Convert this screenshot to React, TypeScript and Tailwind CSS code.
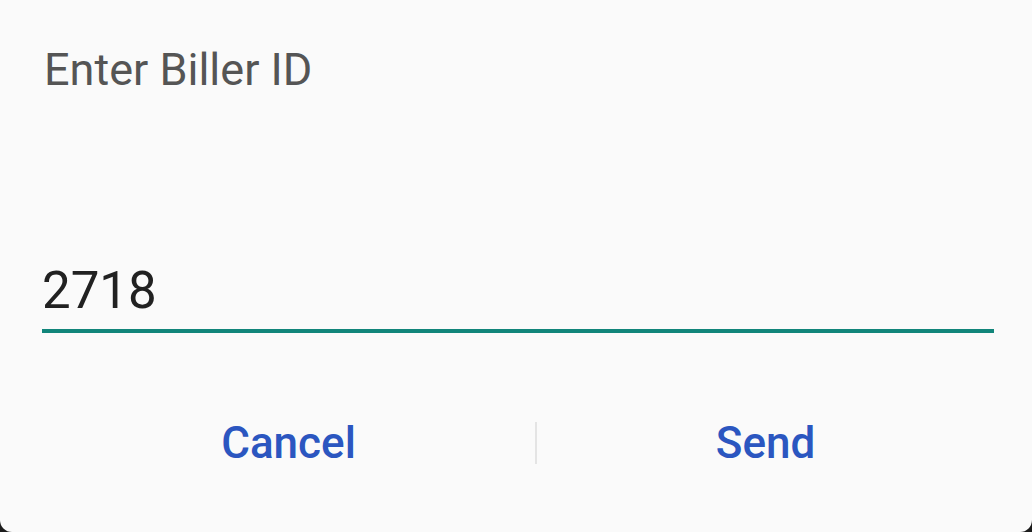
import React, { useState } from 'react';

export default function App() {
  const [billerId, setBillerId] = useState('2718');

  return (
    <div className="w-[1032px] h-[532px] bg-[#1c1c1c] overflow-hidden">
      <div
        className="w-[1032px] h-[532px] bg-[#fafafa] rounded-b-[12px] flex flex-col"
        style={{ fontFamily: 'Roboto, "Noto Sans", sans-serif' }}
      >
        <div className="pt-[44px] px-[44px]">
          <h2 className="text-[45px] leading-[52px] text-[#555555] font-normal">Enter Biller ID</h2>
        </div>

        <div className="mt-[165px] ml-[42px] mr-[38px] border-b-[4px] border-[#11857a] pb-[8px]">
          <input
            value={billerId}
            onChange={(e) => setBillerId(e.target.value)}
            className="w-full bg-transparent outline-none text-[51px] leading-[60px] h-[60px] text-[#212121] p-0"
            style={{ fontFamily: 'Roboto, "Noto Sans", sans-serif' }}
          />
        </div>

        <div className="mt-[84px] pl-[42px] pr-[38px] flex items-center">
          <button className="w-[493px] text-[44px] leading-[52px] font-medium text-[#2b56c0]">Cancel</button>
          <div className="w-[2px] h-[42px] bg-[#e4e4e4]" />
          <button className="flex-1 text-[44px] leading-[52px] font-medium text-[#2b56c0]">Send</button>
        </div>
      </div>
    </div>
  );
}
